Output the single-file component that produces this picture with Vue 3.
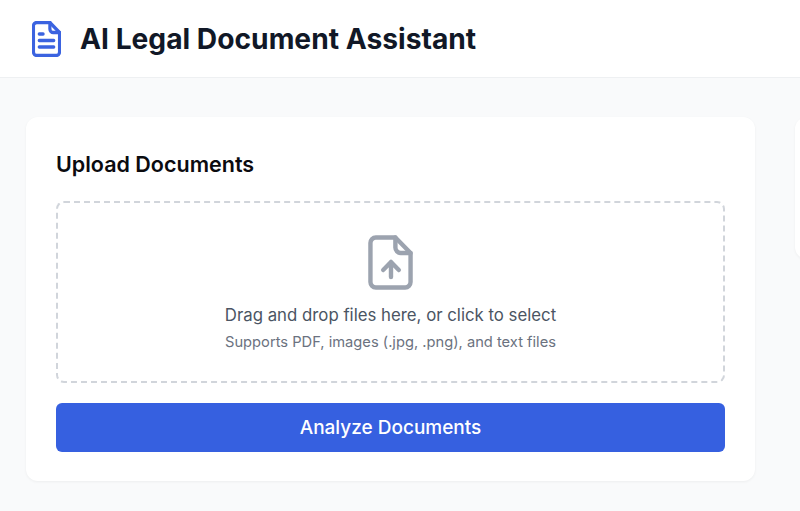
<template>
  <div class="page">
    <header class="top-bar">
      <svg class="logo" width="29" height="36" viewBox="0 0 30 36" fill="none" stroke="#3b63e0" stroke-width="3.300" stroke-linecap="round" stroke-linejoin="round" preserveAspectRatio="none">
        <path d="M18.500 1.500H5A3.500 3.500 0 0 0 1.500 5v26A3.500 3.500 0 0 0 5 34.500h20a3.500 3.500 0 0 0 3.500-3.500V11.500z" />
        <path d="M18.500 1.500v6.500a3.500 3.500 0 0 0 3.500 3.500h6.500" />
        <path d="M7.500 13h4M7.500 19.500h15M7.500 26h15" />
      </svg>
      <h1>AI Legal Document Assistant</h1>
    </header>

    <main class="content">
      <section class="card upload-card">
        <h2>Upload Documents</h2>
        <div class="drop-zone">
          <svg class="file-icon" width="45" height="55" viewBox="0 0 46 55" fill="none" stroke="#9ca3af" stroke-width="4.500" stroke-linecap="round" stroke-linejoin="round" preserveAspectRatio="none">
            <path d="M28 2.500H8a5.500 5.500 0 0 0-5.500 5.500v39a5.500 5.500 0 0 0 5.500 5.500h30a5.500 5.500 0 0 0 5.500-5.500V18z" />
            <path d="M28 2.500v10a5.500 5.500 0 0 0 5.500 5.500h10" />
            <path d="M23.500 42V27M15.500 35l8-8 8 8" />
          </svg>
          <p class="drop-title">Drag and drop files here, or click to select</p>
          <p class="drop-hint">Supports PDF, images (.jpg, .png), and text files</p>
        </div>
        <button class="analyze">Analyze Documents</button>
      </section>

      <aside class="card side-card"></aside>
    </main>
  </div>
</template>

<script setup>
</script>

<style>
html, body {
  margin: 0;
  height: 100%;
  overflow: hidden;
  background: #f9fafb;
}
</style>

<style scoped>
.page {
  width: 800px;
  height: 511px;
  overflow: hidden;
  background: #f9fafb;
  font-family: Inter, "Liberation Sans", sans-serif;
}

.top-bar {
  height: 77px;
  display: flex;
  align-items: center;
  gap: 19px;
  padding-left: 32px;
  background: #fff;
  border-bottom: 1px solid #eef0f2;
}

.logo {
  flex: none;
  margin-top: 1px;
}

h1 {
  margin: 0;
  font-size: 28.2px;
  font-weight: 700;
  color: #111827;
}

.content {
  display: grid;
  grid-template-columns: 729px 300px;
  gap: 40px;
  align-items: start;
  padding: 39px 0 0 26px;
}

.card {
  background: #fff;
  border-radius: 12px;
  box-shadow: 0 1px 3px rgba(0, 0, 0, 0.05);
}

.upload-card {
  box-sizing: border-box;
  height: 364px;
  padding: 30px;
}

.side-card {
  height: 142px;
}

h2 {
  margin: 0 0 20px;
  font-size: 21.5px;
  line-height: 34px;
  font-weight: 600;
  color: #0b0b0f;
}

.drop-zone {
  box-sizing: border-box;
  height: 182px;
  display: flex;
  flex-direction: column;
  align-items: center;
  padding-top: 32px;
  border: 2px dashed #d1d5db;
  border-radius: 8px;
}

.file-icon {
  display: block;
}

.drop-title {
  margin: 13px 0 0;
  font-size: 16.8px;
  line-height: 24px;
  color: #4b5563;
}

.drop-hint {
  margin: 5px 0 0;
  font-size: 14.7px;
  line-height: 20px;
  color: #6b7280;
}

.analyze {
  display: block;
  width: 100%;
  height: 49px;
  margin-top: 20px;
  border: none;
  border-radius: 6px;
  background: #3660e0;
  color: #fff;
  font-family: inherit;
  font-size: 19px;
  font-weight: 500;
}
</style>
